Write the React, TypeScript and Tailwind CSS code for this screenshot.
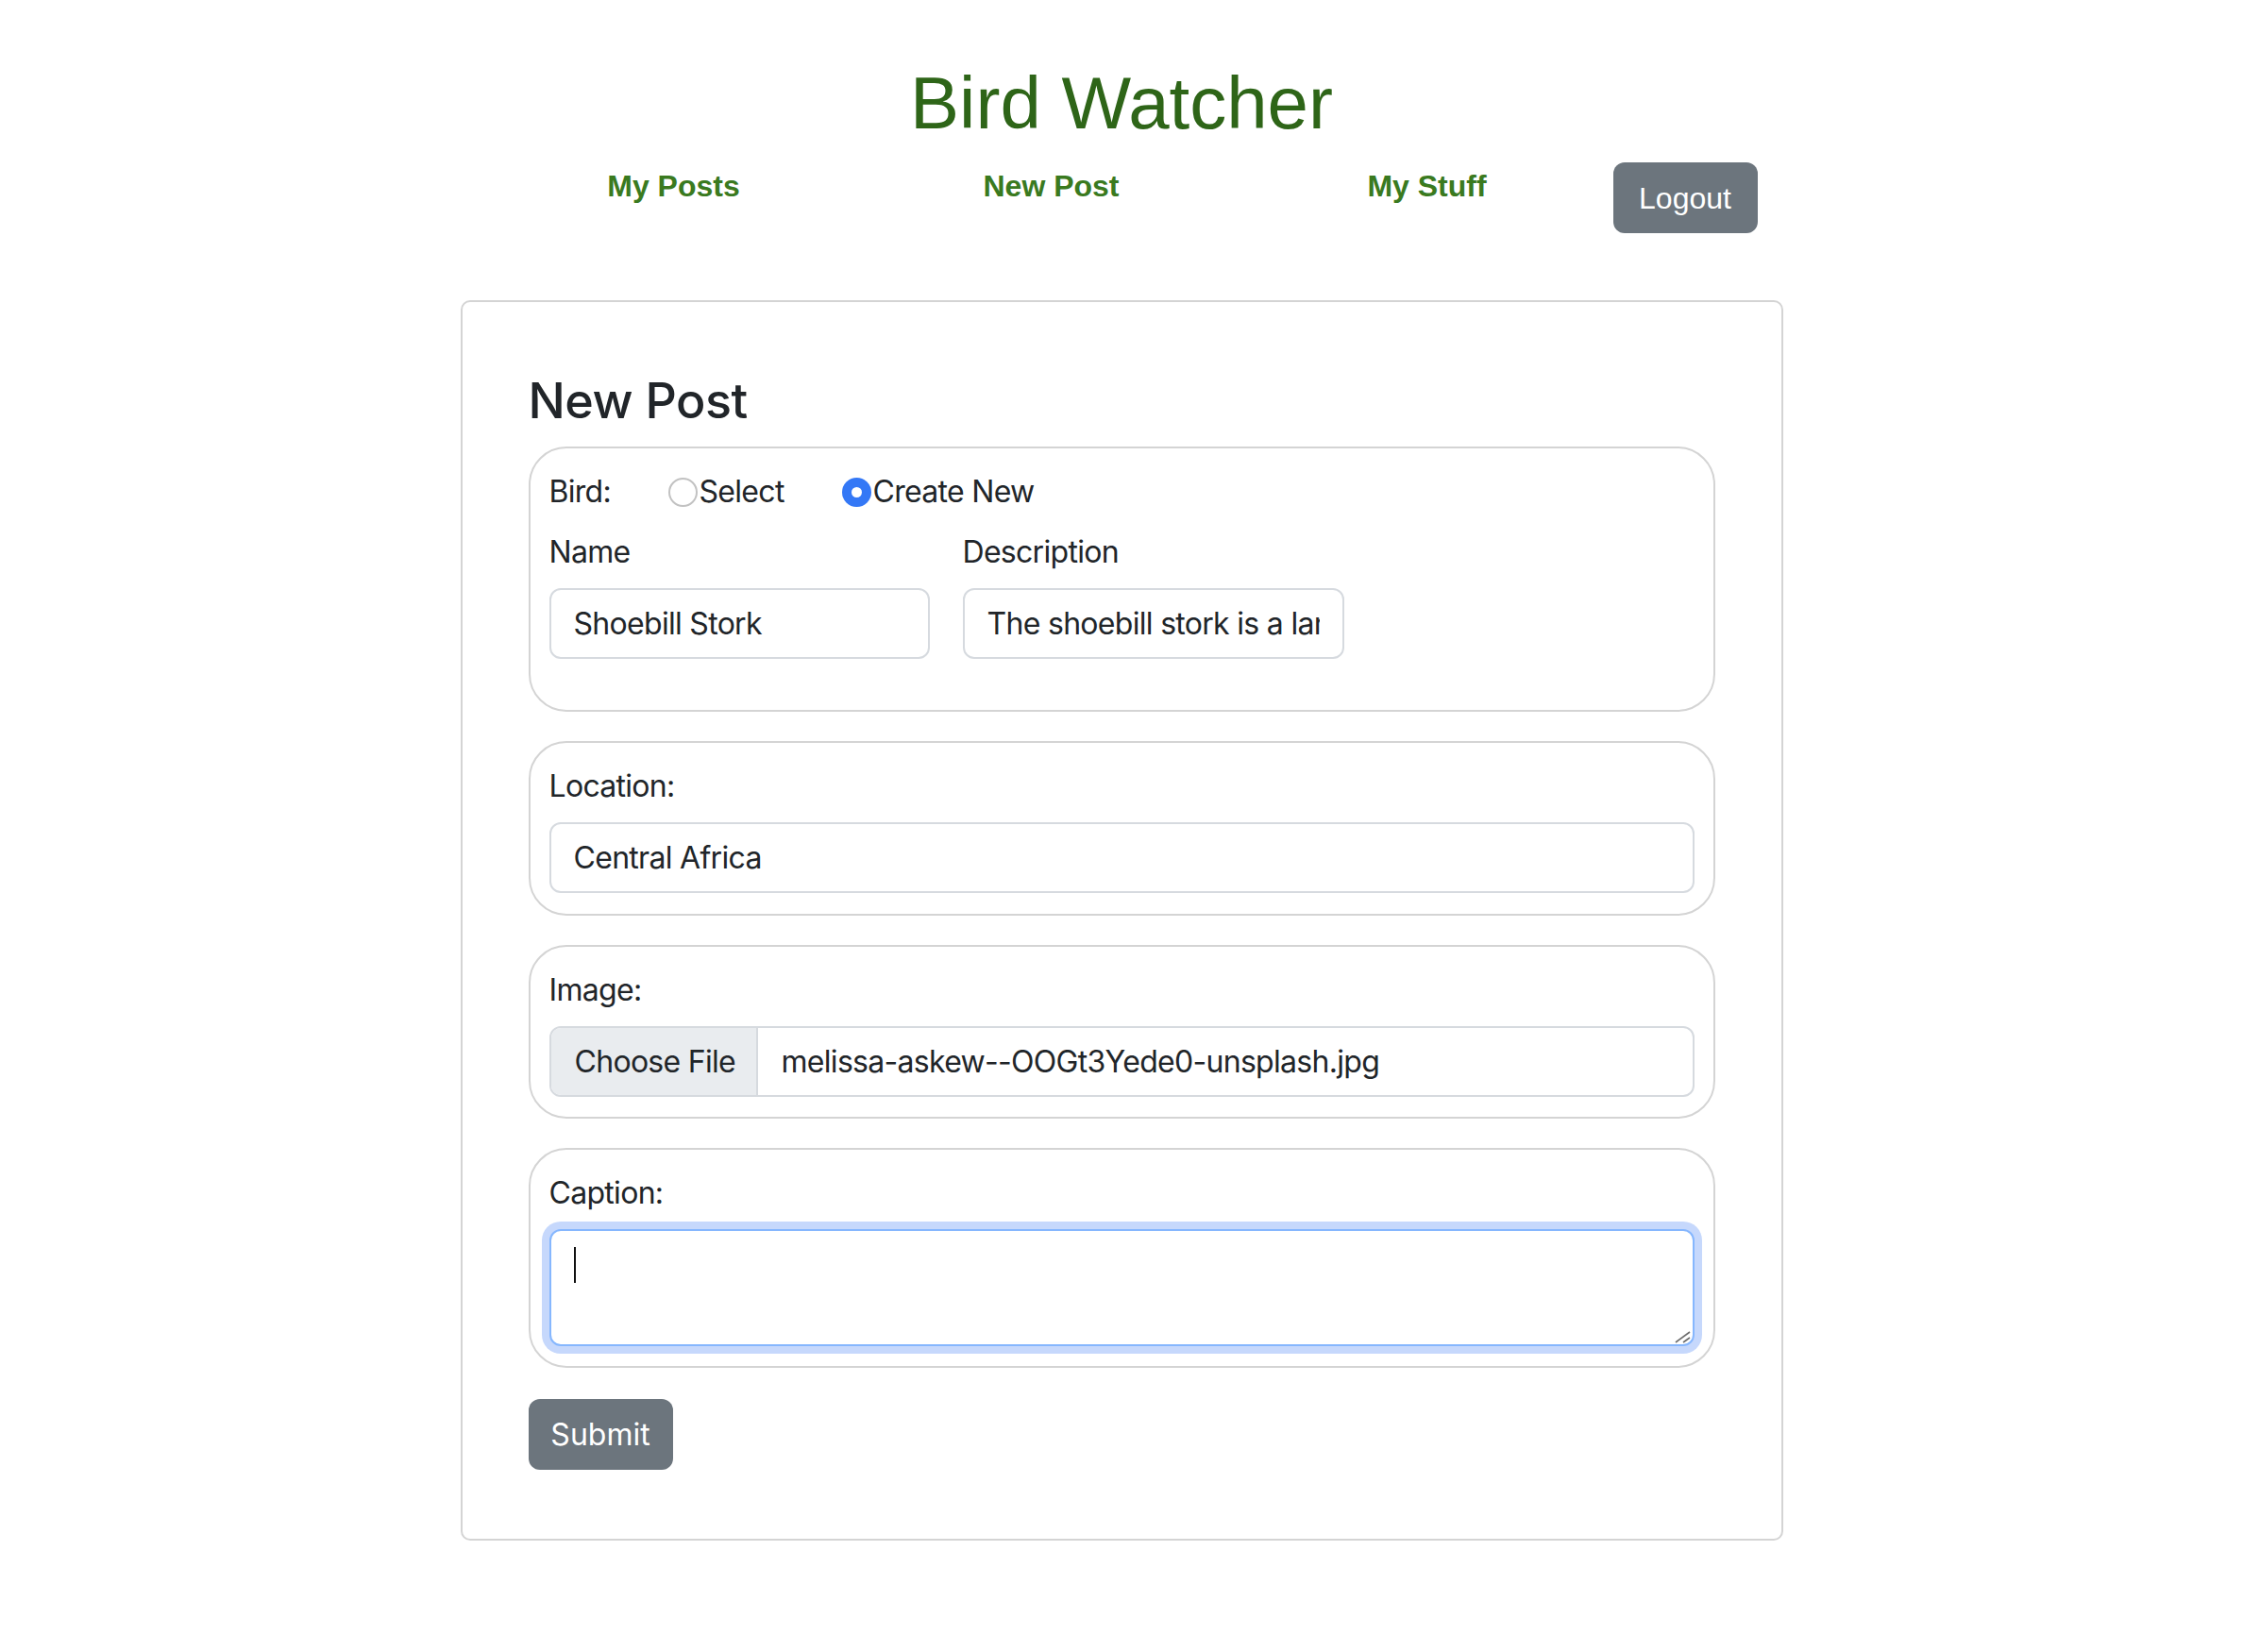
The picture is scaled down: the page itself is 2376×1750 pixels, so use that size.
import React from "react";

function Section({ children, className = "" }: { children: React.ReactNode; className?: string }) {
  return (
    <div className={"rounded-[40px] border-2 border-[#d4d4d4] px-[20px] pt-[22px] " + className}>
      {children}
    </div>
  );
}

function Label({ children }: { children: React.ReactNode }) {
  return <div className="text-[32px] leading-[48px] text-[#212529]">{children}</div>;
}

function TextBox({ value, className = "" }: { value: string; className?: string }) {
  return (
    <input
      readOnly
      value={value}
      className={
        "block h-[75px] rounded-[12px] border-2 border-[#d6dadf] bg-white px-[24px] text-[32px] leading-[48px] tracking-[-0.7px] text-[#212529] outline-none font-['Inter',sans-serif] " +
        className
      }
    />
  );
}

export default function App() {
  return (
    <div className="min-h-[1750px] bg-white font-['Inter','Noto_Sans',sans-serif] text-[#212529]">
      <header className="pt-[62px]">
        <h1 className="text-center font-['Liberation_Sans',Arial,sans-serif] text-[78px] leading-[94px] text-[#2e6518]">
          Bird Watcher
        </h1>
        <nav className="mt-[16px] flex items-start justify-center font-['Liberation_Sans',Arial,sans-serif]">
          <a className="w-[398px] pt-[1px] text-center text-[32px] font-bold leading-[48px] text-[#3a7a1f]">My Posts</a>
          <a className="w-[398px] pt-[1px] pl-[4px] text-center text-[32px] font-bold leading-[48px] text-[#3a7a1f]">New Post</a>
          <a className="w-[398px] pt-[1px] pl-[4px] text-center text-[32px] font-bold leading-[48px] text-[#3a7a1f]">My Stuff</a>
          <button className="h-[75px] w-[153px] rounded-[12px] bg-[#6c757d] text-[32px] leading-[48px] text-white">
            Logout
          </button>
        </nav>
      </header>

      <main className="mx-auto mt-[71px] w-[1401px] rounded-[10px] border-2 border-[#d4d4d4] px-[70px] pt-[74px] pb-[73px] tracking-[-0.7px]">
        <h2 className="mb-[17px] text-[52px] font-medium leading-[62px] tracking-[-0.5px] text-[#212529]">New Post</h2>

        <div className="flex flex-col gap-[31px]">
          <Section className="pb-[54px]">
            <div className="flex items-center text-[32px] leading-[48px]">
              <span className="w-[126px]">Bird:</span>
              <span className="flex w-[184px] items-center">
                <span className="mr-[2px] block h-[31px] w-[31px] rounded-full border-2 border-[#c2c2c2] bg-white" />
                <span>Select</span>
              </span>
              <span className="flex items-center">
                <svg width="31" height="31" viewBox="0 0 31 31" className="mr-[2px] block">
                  <circle cx="15.5" cy="15.5" r="15.5" fill="#3478f6" />
                  <circle cx="15.5" cy="15.5" r="5.5" fill="#ffffff" />
                </svg>
                <span>Create New</span>
              </span>
            </div>
            <div className="mt-[16px] flex gap-[35px]">
              <div className="w-[403px]">
                <Label>Name</Label>
                <TextBox value="Shoebill Stork" className="mt-[14px] w-[403px]" />
              </div>
              <div className="w-[404px]">
                <Label>Description</Label>
                <TextBox
                  value="The shoebill stork is a large long-legged wading bird"
                  className="mt-[14px] w-[404px]"
                />
              </div>
            </div>
          </Section>

          <Section className="pb-[22px]">
            <Label>Location:</Label>
            <TextBox value="Central Africa" className="mt-[14px] w-full" />
          </Section>

          <Section className="pb-[21px]">
            <Label>Image:</Label>
            <div className="mt-[14px] flex h-[75px] w-full overflow-hidden rounded-[12px] border-2 border-[#d6dadf] text-[32px] leading-[48px]">
              <div className="flex w-[219px] items-center border-r-2 border-[#d6dadf] bg-[#e9ecef] pl-[25px]">
                Choose File
              </div>
              <div className="flex items-center pl-[25px]">melissa-askew--OOGt3Yede0-unsplash.jpg</div>
            </div>
          </Section>

          <Section className="pb-[21px]">
            <Label>Caption:</Label>
            <div className="relative mt-[14px] h-[124px] w-full rounded-[12px] border-2 border-[#86b7fe] bg-white pl-[24px] pt-[17px] shadow-[0_0_0_8px_#c6d8fc]">
              <div className="h-[38px] w-[2px] bg-[#111]" />
              <svg width="18" height="14" viewBox="0 0 18 14" className="absolute bottom-[1px] right-[1px]">
                <line x1="1" y1="13" x2="16" y2="2" stroke="#6b6b6b" strokeWidth="1.6" />
                <line x1="9" y1="13" x2="16" y2="8" stroke="#6b6b6b" strokeWidth="1.6" />
              </svg>
            </div>
          </Section>
        </div>

        <button className="mt-[33px] h-[75px] w-[153px] rounded-[12px] bg-[#6c757d] text-[32px] leading-[48px] tracking-normal text-white">
          Submit
        </button>
      </main>
    </div>
  );
}
